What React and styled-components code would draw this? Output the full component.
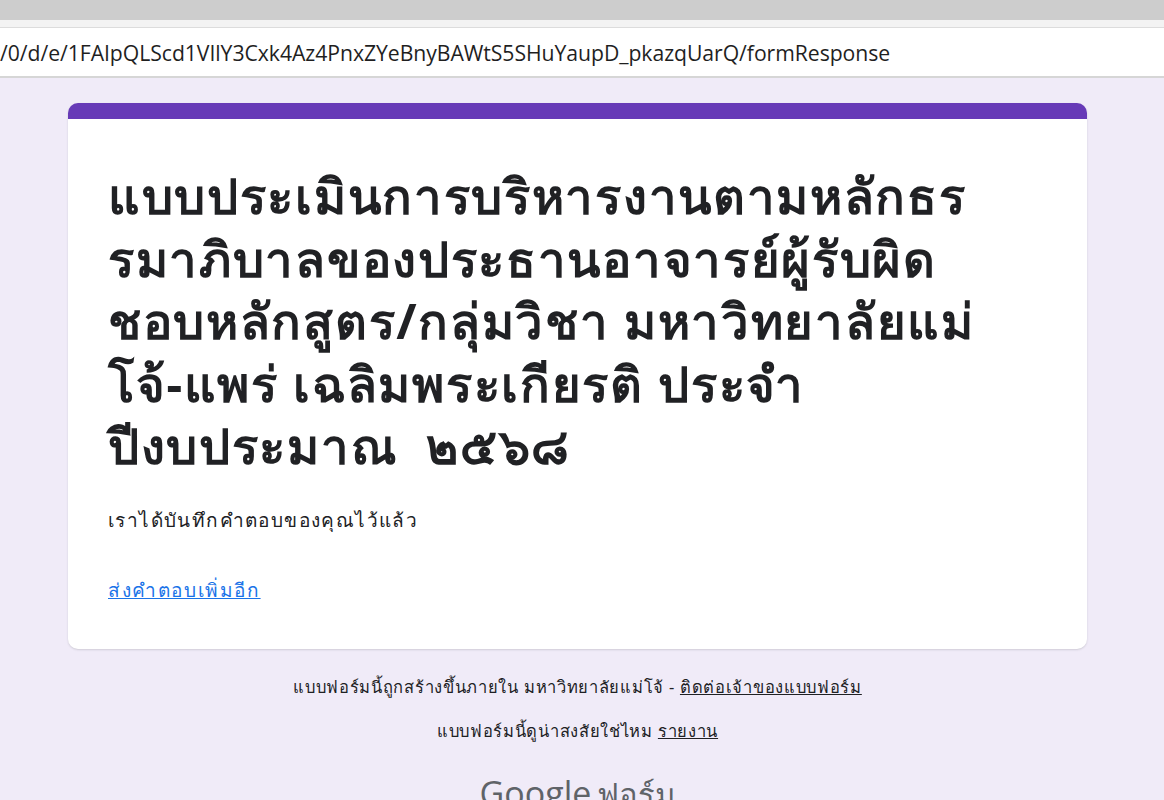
import styled, { createGlobalStyle } from 'styled-components';

const GlobalStyle = createGlobalStyle`
  html, body {
    margin: 0;
    padding: 0;
    background: #f0ebf8;
    font-family: "Noto Sans", "DejaVu Sans", sans-serif;
  }
`;

const Page = styled.div`
  width: 1164px;
  height: 800px;
  overflow: hidden;
  background: #f0ebf8;
  display: flex;
  flex-direction: column;
  & > * {
    flex-shrink: 0;
  }
`;

const TopStrip = styled.div`
  height: 20px;
  background: #cdcdcd;
  border-bottom: 7px solid #f3f3f3;
`;

const UrlBar = styled.div`
  height: 48px;
  background: #ffffff;
  border-top: 1px solid #dcdcdc;
  border-bottom: 2px solid #d6d6d6;
  display: flex;
  align-items: center;
  font-family: "Open Sans", "Noto Sans", sans-serif;
  font-size: 21.2px;
  color: #1f1f1f;
  white-space: nowrap;
  letter-spacing: -0.05px;
`;

const Content = styled.main`
  padding: 25px 0 0 68px;
  display: flex;
  flex-direction: column;
  width: 1019px;
`;

const Card = styled.section`
  background: #fff;
  border-radius: 10px;
  border-top: 16px solid #673ab7;
  box-shadow: 0 1px 2px rgba(60, 64, 67, 0.18);
  padding: 45px 40px 44px 40px;
  font-family: Tahoma, "Leelawadee UI", "Noto Sans", "DejaVu Sans", sans-serif;
`;

const Title = styled.h1`
  margin: 0;
  font-size: 49px;
  font-weight: 700;
  line-height: 62.5px;
  letter-spacing: 1.7px;
  color: #202124;
`;

const TitleLine = styled.span`
  display: block;
  white-space: pre;
`;

const Note = styled.p`
  margin: 28px 0 0 0;
  font-size: 19px;
  letter-spacing: 1.4px;
  color: #202124;
`;

const MoreLink = styled.a`
  display: inline-block;
  margin-top: 40px;
  font-size: 19px;
  letter-spacing: 1.6px;
  color: #1a73e8;
  text-decoration: underline;
`;

const Footer = styled.footer`
  display: flex;
  flex-direction: column;
  align-items: center;
  padding-top: 25px;
  font-family: Tahoma, "Noto Sans", "DejaVu Sans", sans-serif;
  font-size: 16.5px;
  letter-spacing: 0.7px;
  color: #202124;
  gap: 18px;
`;

const FooterLink = styled.a`
  color: #202124;
  text-decoration: underline;
`;

const Brand = styled.div`
  margin-top: 8px;
  color: #5f6368;
  font-family: "Open Sans", "Noto Sans", sans-serif;
  display: flex;
  align-items: baseline;
  gap: 6px;
  letter-spacing: 0;
`;

const BrandWord = styled.span`
  font-size: ${(p) => p.$size || 30}px;
`;

const titleLines = [
  'แบบประเมินการบริหารงานตามหลักธร',
  'รมาภิบาลของประธานอาจารย์ผู้รับผิด',
  'ชอบหลักสูตร/กลุ่มวิชา มหาวิทยาลัยแม่',
  'โจ้-แพร่ เฉลิมพระเกียรติ ประจำ',
  'ปีงบประมาณ  ๒๕๖๘',
];

export default function App() {
  return (
    <>
      <GlobalStyle />
      <Page>
        <TopStrip />
        <UrlBar>/0/d/e/1FAIpQLScd1VIlY3Cxk4Az4PnxZYeBnyBAWtS5SHuYaupD_pkazqUarQ/formResponse</UrlBar>
        <Content>
          <Card>
            <Title>
              {titleLines.map((line) => (
                <TitleLine key={line}>{line}</TitleLine>
              ))}
            </Title>
            <Note>เราได้บันทึกคำตอบของคุณไว้แล้ว</Note>
            <MoreLink href="#">ส่งคำตอบเพิ่มอีก</MoreLink>
          </Card>
          <Footer>
            <div>
              แบบฟอร์มนี้ถูกสร้างขึ้นภายใน มหาวิทยาลัยแม่โจ้ - <FooterLink href="#">ติดต่อเจ้าของแบบฟอร์ม</FooterLink>
            </div>
            <div>
              แบบฟอร์มนี้ดูน่าสงสัยใช่ไหม <FooterLink href="#">รายงาน</FooterLink>
            </div>
            <Brand>
              <BrandWord $size={34}>Google</BrandWord>
              <BrandWord $size={31}>ฟอร์ม</BrandWord>
            </Brand>
          </Footer>
        </Content>
      </Page>
    </>
  );
}
